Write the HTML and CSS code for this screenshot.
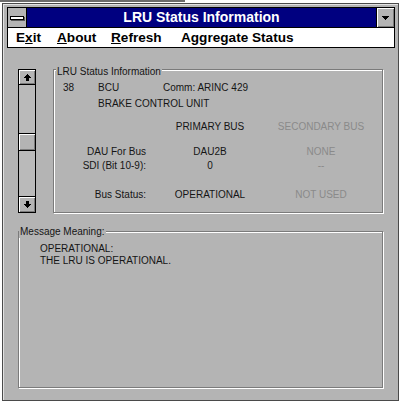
FILE: index.html
```html
<!DOCTYPE html>
<html>
<head>
<meta charset="utf-8">
<title>LRU Status Information</title>
<link rel="stylesheet" href="styles.css">
</head>
<body>
<div class="topline"></div>
<div class="window">
  <div class="header">
    <div class="titlebar">
      <div class="sysbox"><span class="sysbar"></span></div>
      <div class="title">LRU Status Information</div>
      <div class="dropbtn">
        <svg width="7" height="4" viewBox="0 0 7 4" shape-rendering="crispEdges"><path d="M0 0h7v1h-1v1h-1v1h-1v1h-1v-1h-1v-1h-1v-1h-1z" fill="#000"/></svg>
      </div>
    </div>
    <div class="menubar">
      <span class="mi mi-exit">E<u>x</u>it</span>
      <span class="mi mi-about"><u>A</u>bout</span>
      <span class="mi mi-refresh"><u>R</u>efresh</span>
      <span class="mi">Aggregate Status</span>
    </div>
  </div>
  <div class="client">
    <div class="toprow">
      <div class="scrollbar">
        <div class="sbtn up">
          <svg width="7" height="7" viewBox="0 0 7 7" shape-rendering="crispEdges"><path d="M3 0h1v1h1v1h1v1h1v1h-2v3h-3v-3h-2v-1h1v-1h1v-1h1z" fill="#000"/></svg>
        </div>
        <div class="track"><div class="thumb"></div></div>
        <div class="sbtn down">
          <svg width="7" height="7" viewBox="0 0 7 7" shape-rendering="crispEdges"><path d="M2 0h3v3h2v1h-1v1h-1v1h-1v1h-1v-1h-1v-1h-1v-1h-1v-1h2z" fill="#000"/></svg>
        </div>
      </div>
      <div class="group">
        <span class="glabel glabel-lru">LRU Status Information</span>
        <div class="row r1"><span class="c-id">38</span><span class="c-name">BCU</span><span>Comm: ARINC 429</span></div>
        <div class="row r2">BRAKE CONTROL UNIT</div>
        <div class="grid r3"><span></span><span class="v">PRIMARY BUS</span><span class="v dis">SECONDARY BUS</span></div>
        <div class="grid r4"><span class="k">DAU For Bus</span><span class="v">DAU2B</span><span class="v dis">NONE</span></div>
        <div class="grid r5"><span class="k">SDI (Bit 10-9):</span><span class="v">0</span><span class="v dis">--</span></div>
        <div class="grid r6"><span class="k">Bus Status:</span><span class="v">OPERATIONAL</span><span class="v dis">NOT USED</span></div>
      </div>
    </div>
    <div class="msgbox">
      <span class="glabel glabel-msg">Message Meaning:</span>
      <div class="msg">OPERATIONAL:<br>THE LRU IS OPERATIONAL.</div>
    </div>
  </div>
</div>
</body>
</html>
```

FILE: styles.css
```css
html, body {
  margin: 0;
  padding: 0;
  background: #ffffff;
}
body {
  width: 400px;
  height: 403px;
  overflow: hidden;
  padding-left: 2px;
  box-sizing: border-box;
  font-family: "Liberation Sans", Arial, sans-serif;
}
.topline {
  height: 3px;
  width: 185px;
  margin-left: -2px;
  box-sizing: border-box;
  border-top: 2px solid #6b6b6b;
}
.window {
  width: 397px;
  height: 398px;
  box-sizing: border-box;
  border: 1px solid #4a4a4a;
  background: #b4b4b4;
  box-shadow: inset 1px 1px 0 #e2e2e2;
}
.header {
  margin: 3px 3px 0 4px;
  border: 1px solid #000;
}
.titlebar {
  display: flex;
  height: 19px;
  border-bottom: 1px solid #000;
}
.sysbox {
  width: 18px;
  border-right: 1px solid #000;
  background: #b4b4b4;
  display: flex;
  align-items: center;
  justify-content: center;
}
.sysbar {
  display: block;
  width: 14px;
  height: 4px;
  box-sizing: border-box;
  border: 1px solid #000;
  background: #fff;
  box-shadow: 1px 1px 0 #5a5a5a;
}
.title {
  flex: 1;
  background: #000080;
  color: #fff;
  font-weight: bold;
  font-size: 14px;
  line-height: 19px;
  text-align: center;
}
.dropbtn {
  width: 17px;
  border-left: 1px solid #000;
  background: #b4b4b4;
  box-shadow: inset 1px 1px 0 #fff, inset -1px -1px 0 #7b7b7b;
  display: flex;
  align-items: center;
  justify-content: center;
}
.dropbtn svg { display: block; }
.menubar {
  height: 19px;
  background: #fff;
  display: flex;
  padding-left: 8px;
  font-size: 13.6px;
  font-weight: bold;
  line-height: 19px;
  color: #000;
}
.mi { display: block; white-space: nowrap; }
.mi-exit { width: 41px; }
.mi-about { width: 54px; }
.mi-refresh { width: 70px; }
.mi u { text-decoration: underline; text-underline-offset: 1px; }

.client {
  padding-left: 15px;
}
.toprow {
  display: flex;
  gap: 17px;
  margin-top: 21px;
}
.scrollbar {
  width: 18px;
  height: 144px;
  box-sizing: border-box;
  border: 1px solid #000;
  display: flex;
  flex-direction: column;
  background: #bababa;
}
.sbtn {
  background: #b4b4b4;
  box-shadow: inset 1px 1px 0 #fff, inset -1px -1px 0 #7b7b7b;
  display: flex;
  align-items: center;
  justify-content: center;
}
.sbtn svg { display: block; }
.sbtn.up {
  height: 14px;
  border-bottom: 1px solid #000;
}
.sbtn.down {
  height: 15px;
  border-top: 1px solid #000;
}
.track {
  flex: 1;
}
.thumb {
  margin-top: 48px;
  height: 18px;
  box-sizing: border-box;
  border-top: 1px solid #000;
  border-bottom: 1px solid #000;
  background: #b4b4b4;
  box-shadow: inset 1px 1px 0 #fff, inset -1px -1px 0 #7b7b7b;
}

.group, .msgbox {
  position: relative;
  box-sizing: border-box;
  border: 1px solid #7b7b7b;
  box-shadow: 1px 1px 0 #fff, inset 1px 1px 0 #fff;
  font-size: 10px;
  color: #151515;
}
.group {
  width: 330px;
  height: 144px;
  padding-top: 11px;
}
.glabel {
  position: absolute;
  background: #b4b4b4;
  padding: 0 1px;
  line-height: 12px;
  white-space: nowrap;
}
.glabel-lru { top: -4px; left: 2px; }
.glabel-msg { top: -6px; left: 0; }

.row {
  line-height: 14px;
  white-space: nowrap;
}
.r1 { display: flex; padding-left: 9px; }
.c-id { width: 35px; }
.c-name { width: 65px; }
.r2 { margin-top: 2px; padding-left: 44px; }

.grid {
  display: grid;
  grid-template-columns: 92px 128px 94px;
  line-height: 14px;
  white-space: nowrap;
}
.k { text-align: right; }
.v { text-align: center; }
.dis { color: #8a8a8a; }
.r3 { margin-top: 9px; }
.r4 { margin-top: 11px; }
.r5 { margin-top: 0; }
.r6 { margin-top: 15px; }

.msgbox {
  width: 365px;
  height: 157px;
  margin-top: 18px;
  padding: 11px 0 0 21px;
}
.msg {
  line-height: 12px;
}
```
